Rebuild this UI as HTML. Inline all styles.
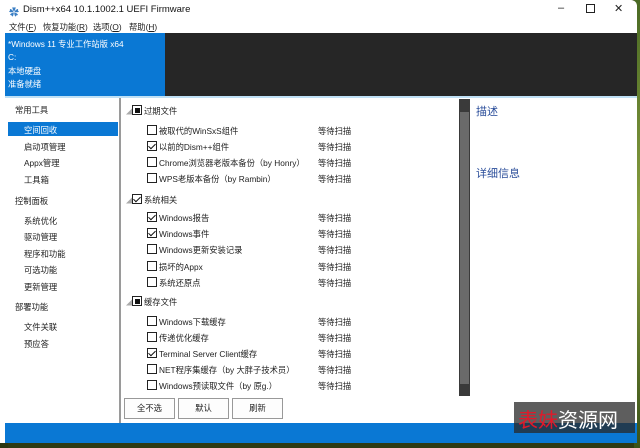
<!DOCTYPE html>
<html><head><meta charset="utf-8"><style>
*{margin:0;padding:0;box-sizing:border-box}
body{width:640px;height:448px;overflow:hidden;background:#2e3a14;font-family:"Liberation Sans","Noto Sans CJK SC",sans-serif;font-size:8.3px;color:#222;position:relative}
.bgl{position:absolute;left:0;top:0;width:8px;height:448px;background:linear-gradient(#3d5a1c,#6a7a30,#2a3512)}
.bgr{position:absolute;right:0;top:0;width:6px;height:448px;background:linear-gradient(#4a6a24,#8aa040,#3a5218)}
.win{position:absolute;left:0;top:0;width:637px;height:443px;background:#fff;border-radius:0 6px 0 0}
.a{position:absolute;white-space:nowrap}
.cb{position:absolute;width:10px;height:10px;border:1px solid #222;background:#fff}
.cb.k::after{content:"";position:absolute;left:2px;top:0px;width:3px;height:6px;border:solid #111;border-width:0 1.5px 1.5px 0;transform:rotate(45deg)}
.cb.f::after{content:"";position:absolute;left:1.5px;top:1.5px;width:5px;height:5px;background:#111}
.st{position:absolute;left:318px}
.btn{position:absolute;top:398px;width:51px;height:21px;border:1px solid #999;background:#fdfdfd;text-align:center;line-height:19px}
.tri{position:absolute;left:126px;color:#aaa;font-size:6px}
</style></head><body>
<div class="bgl"></div><div class="bgr"></div>
<div class="win">
<div class="a" style="left:9px;top:4px;color:#3b7fc4;font-size:10px">✿</div>
<div class="a" style="left:23px;top:4px;font-size:9.5px;color:#111">Dism++x64 10.1.1002.1 UEFI Firmware</div>
<div class="a" style="left:558px;top:2px;font-size:11px">–</div>
<div class="a" style="left:586px;top:4px;width:9px;height:9px;border:1px solid #222"></div>
<div class="a" style="left:614px;top:2px;font-size:11px">✕</div>
<div class="a" style="left:9px;top:21px">文件(<u>F</u>)</div>
<div class="a" style="left:43px;top:21px">恢复功能(<u>R</u>)</div>
<div class="a" style="left:93px;top:21px">选项(<u>O</u>)</div>
<div class="a" style="left:129px;top:21px">帮助(<u>H</u>)</div>
<div class="a" style="left:5px;top:33px;width:160px;height:63px;background:#0a78d4"></div>
<div class="a" style="left:165px;top:33px;width:472px;height:63px;background:#262626"></div>
<div class="a" style="left:5px;top:96px;width:632px;height:2px;background:#bfe0f5"></div>
<div class="a" style="left:8px;top:38px;color:#fff">*Windows 11 专业工作站版 x64</div>
<div class="a" style="left:8px;top:52px;color:#fff">C:</div>
<div class="a" style="left:8px;top:65px;color:#fff">本地硬盘</div>
<div class="a" style="left:8px;top:78px;color:#fff">准备就绪</div>
<div class="a" style="left:119px;top:98px;width:2px;height:325px;background:#9a9a9a"></div>
<div class="a" style="left:15px;top:104px">常用工具</div>
<div class="a" style="left:8px;top:122px;width:110px;height:14px;background:#0a78d4"></div>
<div class="a" style="left:24px;top:124px;color:#fff">空间回收</div>
<div class="a" style="left:24px;top:141px">启动项管理</div>
<div class="a" style="left:24px;top:157px">Appx管理</div>
<div class="a" style="left:24px;top:174px">工具箱</div>
<div class="a" style="left:15px;top:195px">控制面板</div>
<div class="a" style="left:24px;top:215px">系统优化</div>
<div class="a" style="left:24px;top:231px">驱动管理</div>
<div class="a" style="left:24px;top:248px">程序和功能</div>
<div class="a" style="left:24px;top:264px">可选功能</div>
<div class="a" style="left:24px;top:281px">更新管理</div>
<div class="a" style="left:15px;top:301px">部署功能</div>
<div class="a" style="left:24px;top:321px">文件关联</div>
<div class="a" style="left:24px;top:338px">预应答</div>

<div class="tri" style="top:107px">◢</div><div class="cb f" style="left:132px;top:105px"></div><div class="a" style="left:144px;top:105px">过期文件</div>
<div class="cb" style="left:147px;top:125px"></div><div class="a" style="left:159px;top:125px">被取代的WinSxS组件</div><div class="st a" style="top:125px">等待扫描</div>
<div class="cb k" style="left:147px;top:141px"></div><div class="a" style="left:159px;top:141px">以前的Dism++组件</div><div class="st a" style="top:141px">等待扫描</div>
<div class="cb" style="left:147px;top:157px"></div><div class="a" style="left:159px;top:157px">Chrome浏览器老版本备份（by Honry）</div><div class="st a" style="top:157px">等待扫描</div>
<div class="cb" style="left:147px;top:173px"></div><div class="a" style="left:159px;top:173px">WPS老版本备份（by Rambin）</div><div class="st a" style="top:173px">等待扫描</div>
<div class="tri" style="top:196px">◢</div><div class="cb k" style="left:132px;top:194px"></div><div class="a" style="left:144px;top:194px">系统相关</div>
<div class="cb k" style="left:147px;top:212px"></div><div class="a" style="left:159px;top:212px">Windows报告</div><div class="st a" style="top:212px">等待扫描</div>
<div class="cb k" style="left:147px;top:228px"></div><div class="a" style="left:159px;top:228px">Windows事件</div><div class="st a" style="top:228px">等待扫描</div>
<div class="cb" style="left:147px;top:244px"></div><div class="a" style="left:159px;top:244px">Windows更新安装记录</div><div class="st a" style="top:244px">等待扫描</div>
<div class="cb" style="left:147px;top:261px"></div><div class="a" style="left:159px;top:261px">损坏的Appx</div><div class="st a" style="top:261px">等待扫描</div>
<div class="cb" style="left:147px;top:277px"></div><div class="a" style="left:159px;top:277px">系统还原点</div><div class="st a" style="top:277px">等待扫描</div>
<div class="tri" style="top:298px">◢</div><div class="cb f" style="left:132px;top:296px"></div><div class="a" style="left:144px;top:296px">缓存文件</div>
<div class="cb" style="left:147px;top:316px"></div><div class="a" style="left:159px;top:316px">Windows下载缓存</div><div class="st a" style="top:316px">等待扫描</div>
<div class="cb" style="left:147px;top:332px"></div><div class="a" style="left:159px;top:332px">传递优化缓存</div><div class="st a" style="top:332px">等待扫描</div>
<div class="cb k" style="left:147px;top:348px"></div><div class="a" style="left:159px;top:348px">Terminal Server Client缓存</div><div class="st a" style="top:348px">等待扫描</div>
<div class="cb" style="left:147px;top:364px"></div><div class="a" style="left:159px;top:364px">NET程序集缓存（by 大胖子技术员）</div><div class="st a" style="top:364px">等待扫描</div>
<div class="cb" style="left:147px;top:380px"></div><div class="a" style="left:159px;top:380px">Windows预读取文件（by 原g.）</div><div class="st a" style="top:380px">等待扫描</div>

<div class="a" style="left:459px;top:99px;width:11px;height:297px;background:#3a3a3a"></div>
<div class="a" style="left:460px;top:112px;width:9px;height:272px;background:#6a6a6a"></div>
<div class="a" style="left:476px;top:103px;font-size:11px;color:#2a4d9a">描述</div>
<div class="a" style="left:476px;top:165px;font-size:11px;color:#2a4d9a">详细信息</div>

<div class="btn" style="left:124px">全不选</div>
<div class="btn" style="left:178px">默认</div>
<div class="btn" style="left:232px">刷新</div>
<div class="a" style="left:5px;top:423px;width:632px;height:20px;background:#0a78d4"></div>
<div class="a" style="left:514px;top:402px;width:121px;height:31px;background:rgba(40,40,40,.75)"></div>
<div class="a" style="left:518px;top:404px;font-size:20px;color:#fff"><span style="color:#e0192a">表妹</span>资源网</div>
</div>
</body></html>
